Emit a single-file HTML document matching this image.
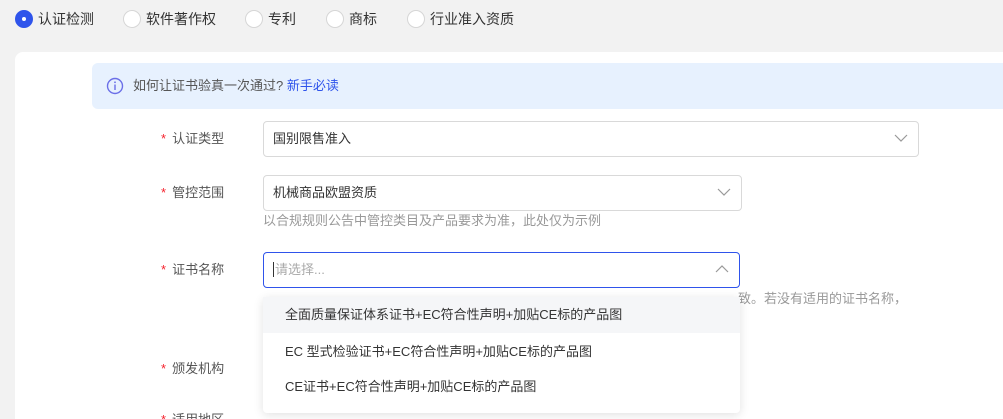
<!DOCTYPE html>
<html><head><meta charset="utf-8"><style>
*{box-sizing:border-box;margin:0;padding:0}
html{width:1003px;height:419px;overflow:hidden}
body{width:1003px;height:419px;overflow:hidden;background:#f2f2f2;font-family:"Liberation Sans","Noto Sans CJK SC",sans-serif;font-size:13px;color:#333;position:relative}
.abs{position:absolute}
.radio{position:absolute;top:10px;width:18px;height:18px;border-radius:50%;border:1px solid #d6d6d6;background:#fff}
.radio.on{background:#2f54eb;border-color:#2f54eb}
.radio.on:after{content:"";position:absolute;left:6px;top:6px;width:4px;height:4px;border-radius:50%;background:#fff}
.rl{position:absolute;top:10px;line-height:18px;font-size:14px;color:#333}
.card{position:absolute;left:15px;top:52px;width:988px;height:367px;background:#fff;border-radius:8px 0 0 0}
.info{position:absolute;left:92px;top:63px;width:911px;height:46px;background:#e7f1fe;border-radius:6px 0 0 6px}
.lab{position:absolute;left:161px;font-size:13px;color:#555;line-height:18px}
.lab b{color:#f5222d;font-weight:normal;margin-right:6px}
.sel{position:absolute;left:263px;height:36px;border:1px solid #d9d9d9;border-radius:4px;background:#fff;padding-left:9px;line-height:34px;color:#333}
.arr{position:absolute;top:11px;width:14px;height:10px}
.hint{position:absolute;color:#999;font-size:13px;line-height:18px}
.dd{position:absolute;left:263px;top:297px;width:477px;height:116px;background:#fff;border-radius:4px;box-shadow:0 2px 10px rgba(0,0,0,.12)}
.it{position:absolute;left:0;width:100%;height:36px;line-height:36px;padding-left:22px;color:#333}
</style></head><body>
<div class="radio on" style="left:15px"></div><div class="rl" style="left:38px">认证检测</div>
<div class="radio" style="left:123px"></div><div class="rl" style="left:146px">软件著作权</div>
<div class="radio" style="left:245px"></div><div class="rl" style="left:268px">专利</div>
<div class="radio" style="left:326px"></div><div class="rl" style="left:349px">商标</div>
<div class="radio" style="left:407px"></div><div class="rl" style="left:430px">行业准入资质</div>

<div class="card"></div>
<div class="info"></div>
<svg class="abs" style="left:106px;top:77px" width="18" height="18" viewBox="0 0 18 18"><circle cx="9" cy="9" r="7.5" fill="none" stroke="#6b6fe8" stroke-width="1.4"/><rect x="8.3" y="7.5" width="1.4" height="5.5" fill="#6b6fe8"/><circle cx="9" cy="5.3" r=".9" fill="#6b6fe8"/></svg>
<div class="abs" style="left:133px;top:77px;line-height:18px;color:#555">如何让证书验真一次通过? <span style="color:#2f54eb">新手必读</span></div>

<div class="lab" style="top:130px"><b>*</b>认证类型</div>
<div class="sel" style="top:121px;width:656px">国别限售准入<svg class="arr" style="right:10px" viewBox="0 0 14 10"><path d="M1 2l6 6 6-6" fill="none" stroke="#999" stroke-width="1.2"/></svg></div>

<div class="lab" style="top:184px"><b>*</b>管控范围</div>
<div class="sel" style="top:175px;width:479px">机械商品欧盟资质<svg class="arr" style="right:10px" viewBox="0 0 14 10"><path d="M1 2l6 6 6-6" fill="none" stroke="#999" stroke-width="1.2"/></svg></div>
<div class="hint" style="left:263px;top:212px">以合规规则公告中管控类目及产品要求为准，此处仅为示例</div>

<div class="lab" style="top:261px"><b>*</b>证书名称</div>
<div class="sel" style="top:252px;width:477px;border-color:#2f54eb;color:#aaa"><span style="border-left:1px solid #333;padding-left:1px">请选择...</span><svg class="arr" style="right:10px" viewBox="0 0 14 10"><path d="M1 8l6-6 6 6" fill="none" stroke="#999" stroke-width="1.2"/></svg></div>
<div class="hint" style="left:738px;top:290px">致。若没有适用的证书名称，</div>

<div class="lab" style="top:360px"><b>*</b>颁发机构</div>
<div class="lab" style="top:411px"><b>*</b>适用地区</div>

<div class="dd">
<div class="it" style="top:0;background:#f5f6f8">全面质量保证体系证书+EC符合性声明+加贴CE标的产品图</div>
<div class="it" style="top:37px">EC 型式检验证书+EC符合性声明+加贴CE标的产品图</div>
<div class="it" style="top:72px">CE证书+EC符合性声明+加贴CE标的产品图</div>
</div>
</body></html>
